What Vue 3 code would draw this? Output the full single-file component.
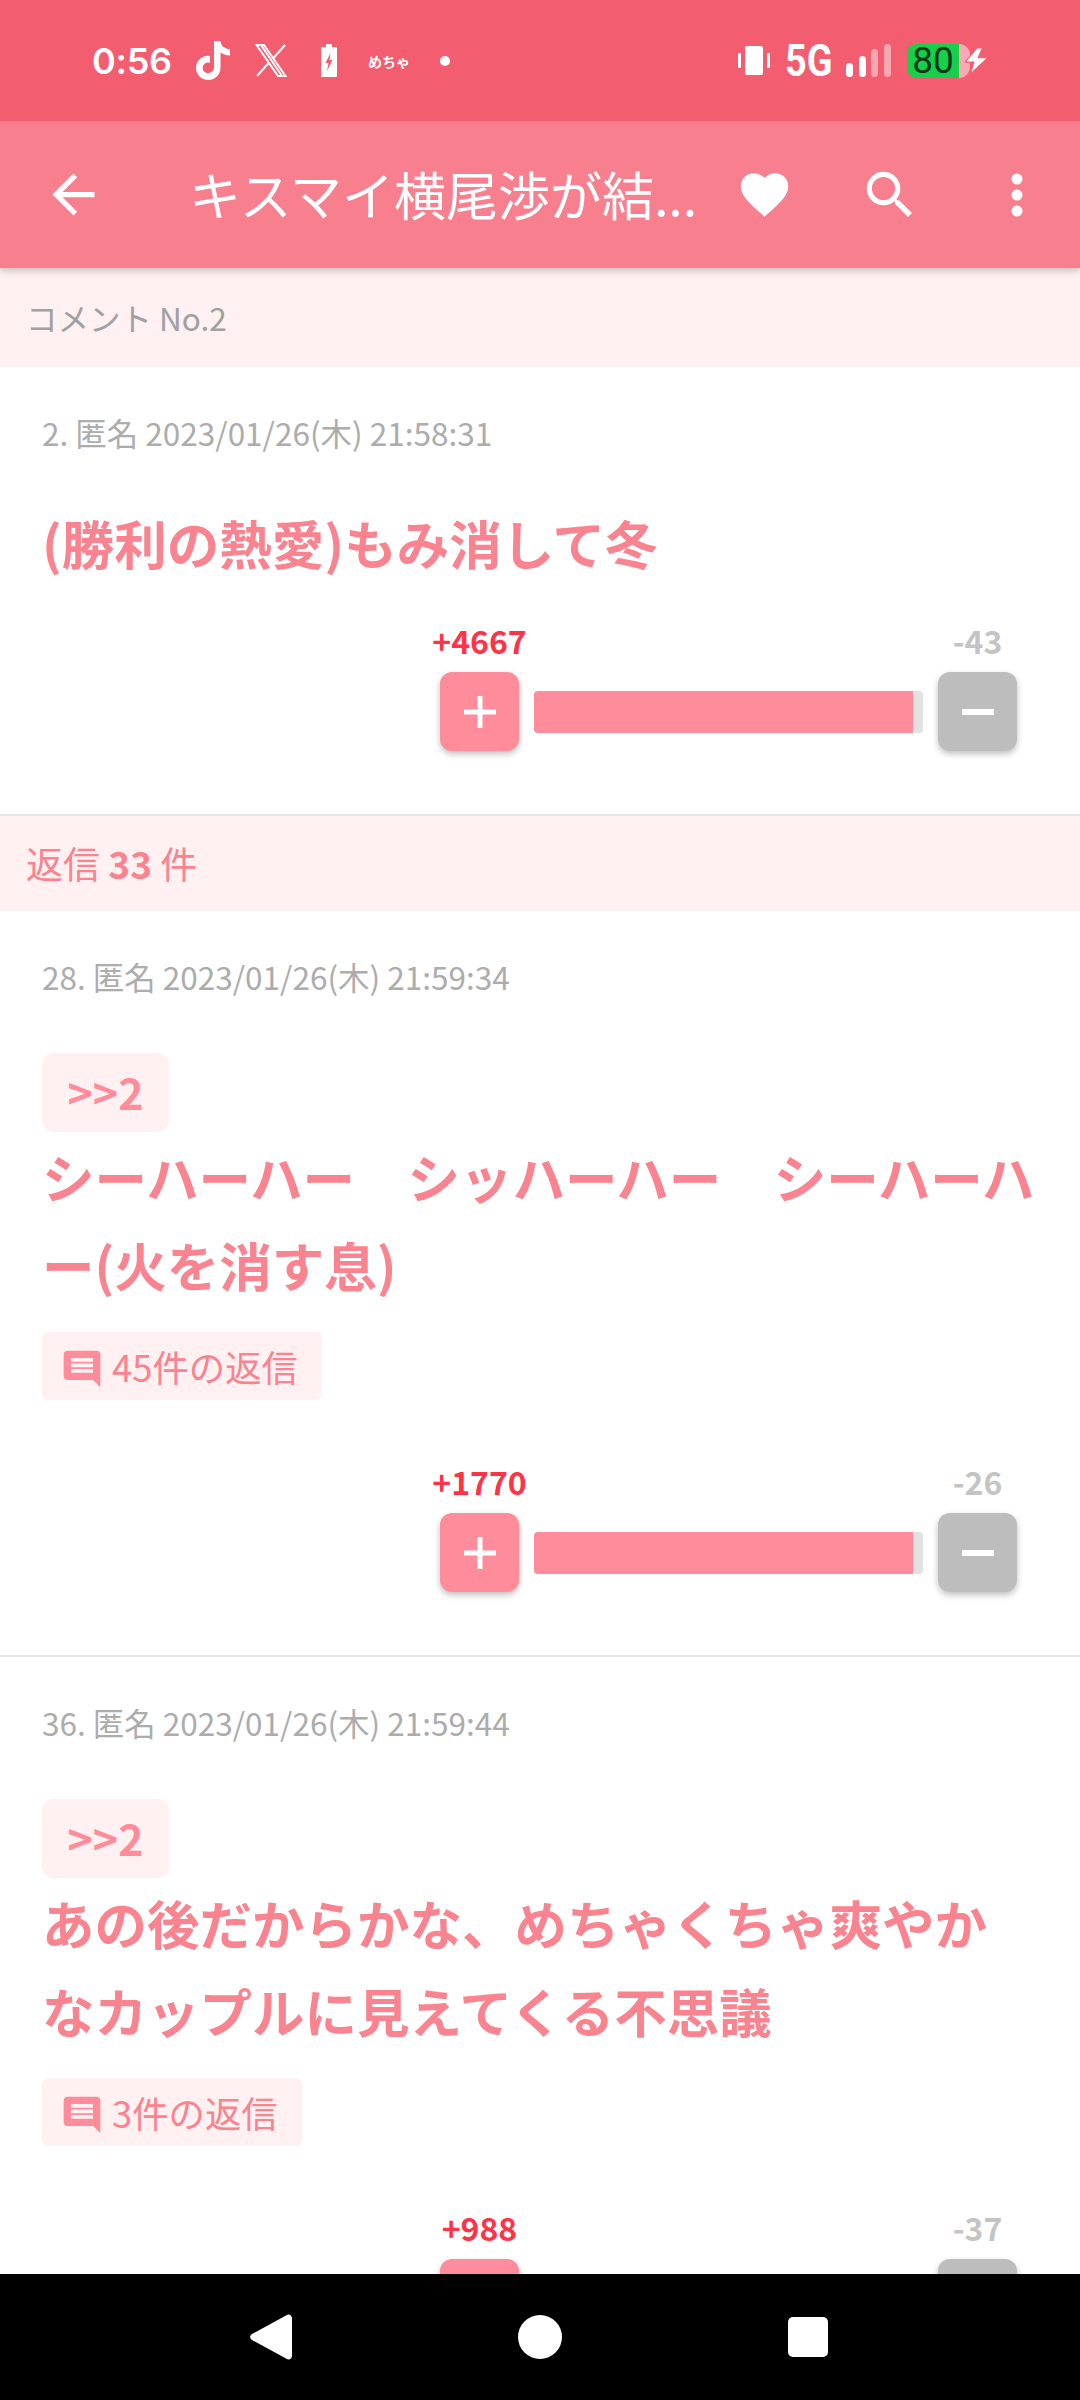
<script setup>
const comments = [
  { id: 1, head: '2. 匿名 2023/01/26(木) 21:58:31', lines: ['(勝利の熱愛)もみ消して冬'], plus: 4667, minus: 43, fill: 97.5 },
  { id: 2, head: '28. 匿名 2023/01/26(木) 21:59:34', quote: '>>2', lines: ['シーハーハー　シッハーハー　シーハーハ', 'ー(火を消す息)'], replies: 45, plus: 1770, minus: 26, fill: 97.5 },
  { id: 3, head: '36. 匿名 2023/01/26(木) 21:59:44', quote: '>>2', lines: ['あの後だからかな、めちゃくちゃ爽やか', 'なカップルに見えてくる不思議'], replies: 3, plus: 988, minus: 37, fill: 96 },
]
</script>

<template>
  <div class="phone">
    <div class="status">
      <span class="time">0:56</span>
      <svg class="st-tiktok" width="34" height="39" viewBox="0 0 34 39"><path fill="#fff" d="M18 0h6.500c.5 4.600 3.300 7.700 9.500 8.200v6.300c-3.500 0-6.700-1-9.500-3v14.800C24.500 33.600 19.500 39 12.300 39 5.500 39 0 33.600 0 26.800c0-7.500 6.600-13 14-11.800v6.700c-3.600-1-7.300 1.400-7.300 5 0 2.900 2.400 5.300 5.400 5.300 3.300 0 5.900-2.400 5.900-6V0z"/></svg>
      <svg class="st-x" width="32" height="33" viewBox="0 0 32 33"><path fill="none" stroke="#fff" stroke-width="2" d="M1.500 1h7.500l21.500 31h-7.500zM6 1l21 31M30 1 18 14.500M13.500 19 2 32"/></svg>
      <svg class="st-batt" width="16" height="33" viewBox="0 0 16 33"><path fill="#fff" d="M5 0h6v3h4a1 1 0 0 1 1 1v28a1 1 0 0 1-1 1H1a1 1 0 0 1-1-1V4a1 1 0 0 1 1-1h4z"/><path fill="#f25d6f" d="M9.500 9 4.500 19h3l-1.500 8 5.500-11h-3z"/></svg>
      <span class="st-app">めちゃ</span>
      <span class="st-dot"></span>
      <span class="st-space"></span>
      <svg width="32" height="29" viewBox="0 0 32 29"><rect x="7" y="0" width="18" height="29" rx="2" fill="#fff"/><rect x="0" y="7" width="3" height="15" rx="1" fill="#fff"/><rect x="29" y="7" width="3" height="15" rx="1" fill="#fff"/></svg>
      <span class="st-net">5G</span>
      <svg class="st-signal" width="45" height="33" viewBox="0 0 45 33"><rect x="0" y="19" width="7" height="14" rx="3.500" fill="#fff"/><rect x="13" y="12" width="7" height="21" rx="3.500" fill="#fff"/><rect x="25" y="5" width="7" height="28" rx="3.500" fill="#fff" opacity=".45"/><rect x="38" y="0" width="7" height="33" rx="3.500" fill="#fff" opacity=".45"/></svg>
      <span class="st-level">
        <span class="st-green">80</span>
        <span class="st-tip"></span>
      </span>
      <svg class="st-bolt" width="23" height="26" viewBox="0 0 21 24"><path fill="#fff" stroke="#f25d6f" stroke-width="1" d="M11 0 0 13h8l-3 11 16-15h-9l4-9z"/></svg>
    </div>

    <header class="appbar">
      <svg class="back" width="63" height="63" viewBox="0 0 24 24"><path fill="#fff" d="M20 11H7.830l5.590-5.590L12 4l-8 8 8 8 1.410-1.410L7.830 13H20v-2z"/></svg>
      <div class="title">キスマイ横尾渉が結...</div>
      <svg class="heart" width="57" height="57" viewBox="0 0 24 24"><path fill="#fff" d="M12 21.350l-1.450-1.320C5.400 15.360 2 12.280 2 8.500 2 5.420 4.420 3 7.500 3c1.740 0 3.410.81 4.500 2.090C13.090 3.810 14.760 3 16.500 3 19.580 3 22 5.420 22 8.500c0 3.780-3.400 6.860-8.550 11.540L12 21.350z"/></svg>
      <svg class="search" width="62" height="62" viewBox="0 0 24 24"><path fill="#fff" d="M15.500 14h-.79l-.28-.27C15.410 12.590 16 11.110 16 9.500 16 5.910 13.090 3 9.500 3S3 5.910 3 9.500 5.910 16 9.500 16c1.610 0 3.090-.59 4.230-1.570l.27.28v.79l5 4.990L20.490 19l-4.990-5zm-6 0C7.010 14 5 11.990 5 9.500S7.010 5 9.500 5 14 7.010 14 9.500 11.990 14 9.500 14z"/></svg>
      <svg class="more" width="12" height="44" viewBox="0 0 12 44"><circle cx="6" cy="6" r="5.500" fill="#fff"/><circle cx="6" cy="22" r="5.500" fill="#fff"/><circle cx="6" cy="38" r="5.500" fill="#fff"/></svg>
    </header>

    <main class="content">
      <template v-for="(c, i) in comments" :key="c.id">
        <div v-if="i === 0" class="band band-grey">コメント No.2</div>
        <div v-if="i === 1" class="band band-pink">返信 <b>33</b> 件</div>
        <article class="comment">
          <div class="head">{{ c.head }}</div>
          <div v-if="c.quote" class="quote">{{ c.quote }}</div>
          <div class="body" :class="{ tight: c.quote }">
            <div v-for="line in c.lines" :key="line">{{ line }}</div>
          </div>
          <div v-if="c.replies" class="replies">
            <svg class="reply-icon" width="44" height="44" viewBox="0 0 24 24"><path fill="#ff8c9a" d="M21.990 4c0-1.100-.89-2-1.990-2H4c-1.100 0-2 .9-2 2v12c0 1.100.9 2 2 2h14l4 4-.01-18zM18 14H6v-2h12v2zm0-3H6V9h12v2zm0-3H6V6h12v2z"/></svg>
            <span>{{ c.replies }}件の返信</span>
          </div>
          <div class="vote" :class="{ spaced: c.replies }">
            <span class="num num-plus">+{{ c.plus }}</span>
            <span></span>
            <span class="num num-minus">-{{ c.minus }}</span>
            <div class="btn btn-plus">
              <svg width="32" height="32" viewBox="0 0 32 32"><path fill="#fff" d="M13.500 0h5v13.500H32v5H18.500V32h-5V18.500H0v-5h13.500z"/></svg>
            </div>
            <div class="bar"><div class="bar-fill" :style="{ width: c.fill + '%' }"></div></div>
            <div class="btn btn-minus">
              <svg width="32" height="6" viewBox="0 0 32 6"><rect width="32" height="6" fill="#fff"/></svg>
            </div>
          </div>
        </article>
      </template>
    </main>

    <nav class="navbar">
      <svg width="42" height="46" viewBox="0 0 42 46"><path fill="#fff" d="M36 1.500c3-2.500 6-.5 6 3v37c0 3.500-3 5.500-6 3L2 26c-2.500-1.700-2.500-4.300 0-6z"/></svg>
      <svg width="44" height="44" viewBox="0 0 44 44"><circle cx="22" cy="22" r="22" fill="#fff"/></svg>
      <svg width="40" height="40" viewBox="0 0 40 40"><rect width="40" height="40" rx="5" fill="#fff"/></svg>
    </nav>
  </div>
</template>

<style scoped>
.phone {
  width: 1080px;
  height: 2400px;
  display: flex;
  flex-direction: column;
  overflow: hidden;
  background: #fff;
  font-family: "Noto Sans CJK JP", "Noto Sans", sans-serif;
}

.status {
  position: relative;
  z-index: 2;
  height: 121px;
  flex: none;
  display: flex;
  align-items: center;
  padding: 0 92px 0 92px;
  box-sizing: border-box;
  background: #f25d6f;
  color: #fff;
}

.time {
  font-family: Inter, Roboto, sans-serif;
  font-size: 36px;
  font-weight: 600;
  width: 80px;
  letter-spacing: -0.3px;
  white-space: nowrap;
}

.st-tiktok { margin-left: 24px; }
.st-x { margin-left: 25px; }
.st-batt { margin-left: 34px; }

.st-app {
  margin-left: 31px;
  width: 39px;
  font-size: 14px;
  font-weight: 700;
  white-space: nowrap;
}

.st-dot {
  margin-left: 33px;
  width: 10px;
  height: 10px;
  border-radius: 50%;
  background: #fff;
}

.st-space { flex: 1; }

.st-net {
  margin-left: 15px;
  width: 46px;
  font-family: Roboto, sans-serif;
  font-size: 45px;
  font-weight: 700;
  line-height: 1;
  transform: scaleX(0.84);
  transform-origin: left center;
  white-space: nowrap;
}

.st-signal { margin-left: 15px; }

.st-level {
  margin-left: 16px;
  display: flex;
  height: 34px;
  width: 63px;
}

.st-green {
  width: 52px;
  background: #17cf4b;
  border-radius: 9px 0 0 9px;
  color: #07391a;
  font-family: Roboto, sans-serif;
  font-size: 37px;
  line-height: 34px;
  text-align: center;
}

.st-tip {
  width: 11px;
  background: #f8a9b3;
  border-radius: 0 11px 11px 0;
}

.st-bolt {
  position: relative;
  margin-left: -5px;
}

.appbar {
  position: relative;
  z-index: 1;
  height: 147px;
  flex: none;
  display: flex;
  align-items: center;
  padding-left: 42px;
  box-sizing: border-box;
  background: #f87f8e;
  box-shadow: 0 2px 8px rgba(0, 0, 0, 0.25);
}

.title {
  margin-left: 84px;
  padding-bottom: 2px;
  width: 511px;
  color: #fff;
  font-size: 52px;
  white-space: nowrap;
  overflow: hidden;
}

.heart { margin-left: 36px; }
.search { margin-left: 66px; }
.more { margin-left: 90px; }

.content {
  flex: 1;
  min-height: 0;
  overflow: hidden;
}

.band {
  height: 95px;
  padding-left: 26px;
  padding-bottom: 2px;
  box-sizing: border-box;
  display: flex;
  align-items: center;
  white-space: pre;
  background: #fff0f1;
}

.band-grey {
  height: 99px;
  font-size: 31.5px;
  color: #a0a0a0;
}

.band-pink {
  font-size: 37px;
  color: #f9838f;
}

.band-pink b {
  font-weight: 700;
}

.comment {
  padding: 47px 30px 63px 42px;
  border-bottom: 2px solid #e6e6e6;
}

.head {
  height: 40px;
  line-height: 37px;
  font-size: 31.5px;
  color: #acacac;
}

.quote {
  margin-top: 55px;
  width: 127px;
  height: 79px;
  line-height: 77px;
  border-radius: 12px;
  text-align: center;
  font-size: 43px;
  font-weight: 700;
  color: #ff8c9a;
  background: #fff0f1;
}

.body {
  margin-top: 44px;
  font-size: 52.500px;
  font-weight: 700;
  line-height: 88px;
  color: #f9838f;
  white-space: nowrap;
}

.body.tight {
  margin-top: 0;
}

.replies {
  margin-top: 24px;
  width: fit-content;
  height: 68px;
  padding: 0 24px 0 18px;
  display: flex;
  align-items: center;
  gap: 8px;
  border-radius: 6px;
  font-size: 36.400px;
  color: #f9838f;
  background: #fff0f1;
}

.reply-icon {
  margin-top: 6px;
}

.vote {
  margin-top: 36px;
  margin-right: 33px;
  display: grid;
  grid-template-columns: 79px 389px 79px;
  grid-template-rows: 40px 79px;
  column-gap: 15px;
  row-gap: 10px;
  justify-content: end;
}

.vote.spaced {
  margin-top: 63px;
}

.num {
  display: flex;
  justify-content: center;
  align-items: center;
  padding-bottom: 5px;
  white-space: nowrap;
  font-size: 32px;
  font-weight: 700;
}

.num-plus { color: #ff3347; }
.num-minus { color: #c4c4c4; }

.btn {
  display: flex;
  align-items: center;
  justify-content: center;
  border-radius: 12px;
  box-shadow: 0 3px 6px rgba(0, 0, 0, 0.25);
}

.btn-plus { background: #ff8c9a; }
.btn-minus { background: #bdbdbd; }

.bar {
  align-self: center;
  height: 42px;
  border-radius: 4px;
  overflow: hidden;
  background: #e2e2e2;
}

.bar-fill {
  height: 100%;
  background: #ff8c9a;
}

.navbar {
  height: 126px;
  flex: none;
  position: relative;
  z-index: 1;
  display: flex;
  align-items: center;
  padding-left: 250px;
  gap: 0 226px;
  box-sizing: border-box;
  background: #000;
}
</style>
